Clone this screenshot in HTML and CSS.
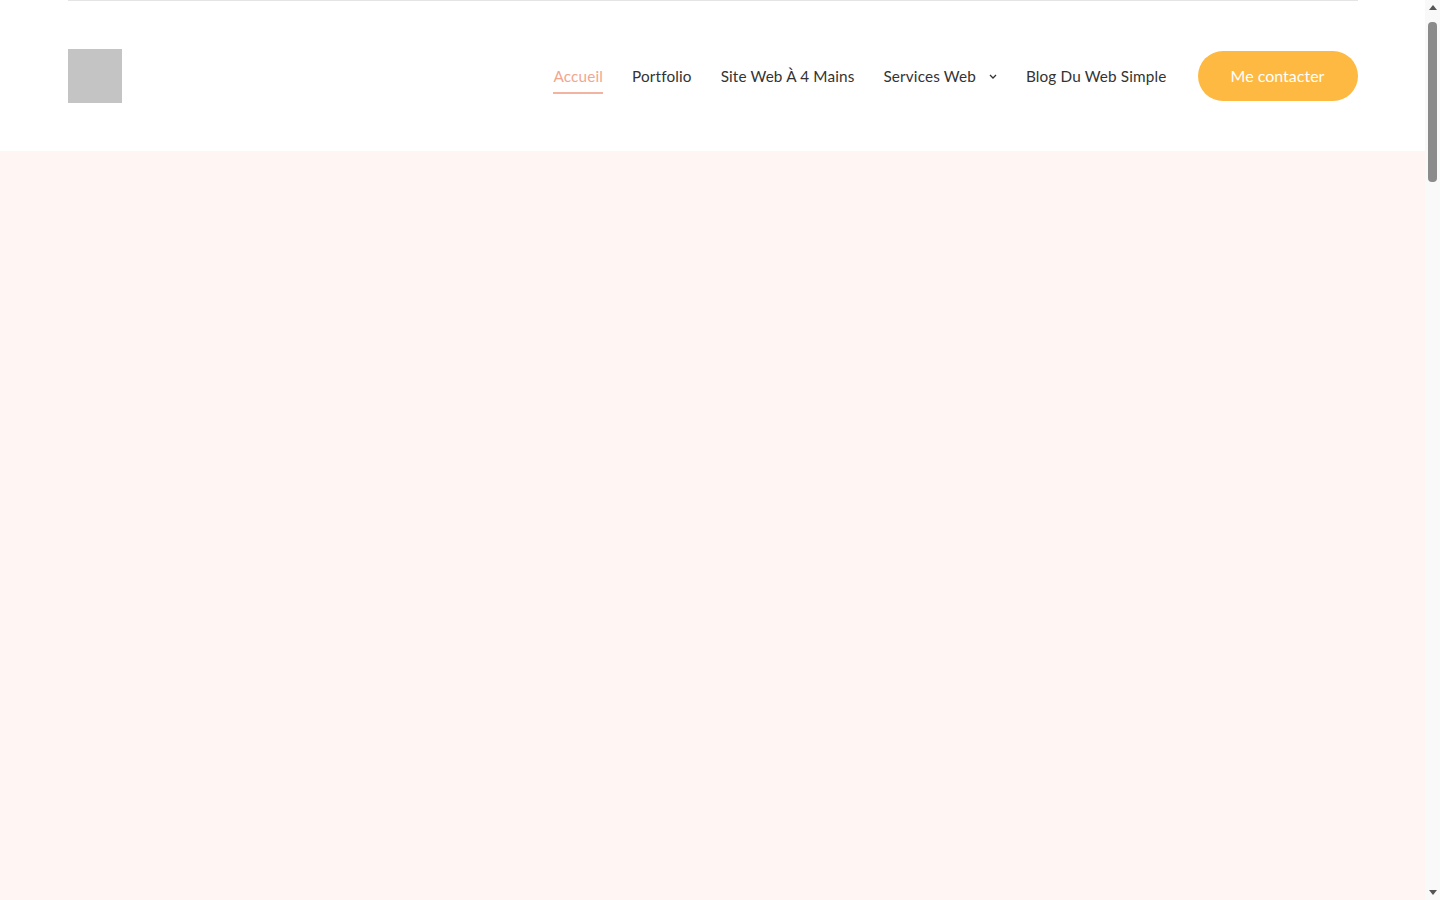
FILE: index.html
```html
<!DOCTYPE html>
<html lang="fr">
<head>
	<meta charset="utf-8">
	<title>Accueil</title>
	<link rel="stylesheet" href="styles.css">
</head>
<body>
	<header class="site-header">
		<div class="header-inner">
			<a class="logo" href="#"></a>
			<nav class="main-nav">
				<ul class="menu">
					<li><a class="menu-link active" href="#">Accueil</a></li>
					<li><a class="menu-link" href="#">Portfolio</a></li>
					<li><a class="menu-link" href="#">Site Web À 4 Mains</a></li>
					<li>
						<a class="menu-link has-sub" href="#">Services Web
							<svg class="caret" width="8" height="5" viewBox="0 0 8 5"><path d="M1 1l3 3 3-3" fill="none" stroke="#333" stroke-width="1.3"/></svg>
						</a>
					</li>
					<li><a class="menu-link" href="#">Blog Du Web Simple</a></li>
				</ul>
				<a class="btn-contact" href="#">Me contacter</a>
			</nav>
		</div>
	</header>
	<!-- bloc principal -->
	<main class="hero"></main>

	<!-- barre de défilement -->
	<div class="scroll-rail">
		<svg class="rail-arrow" width="8" height="5" viewBox="0 0 8 5"><path d="M0 5L4 0 8 5z" fill="#555"/></svg>
		<div class="rail-track"><div class="rail-thumb"></div></div>
		<svg class="rail-arrow" width="8" height="5" viewBox="0 0 8 5"><path d="M0 0L4 5 8 0z" fill="#555"/></svg>
	</div>
</body>
</html>
```

FILE: styles.css
```css
*{
	margin: 0;
	padding: 0;
	box-sizing: border-box;
}
body{
	font-family: "Lato", "Open Sans", sans-serif;
	color: #333;
	background: #fff;
	width: calc(100% - 15px);
}
a{
	text-decoration: none;
	color: inherit;
}

.site-header{
	background: #fff;
}
.header-inner{
	width: 1290px;
	margin: 0 auto;
	height: 151px;
	border-top: 1px solid #e4e4e4;
	display: flex;
	align-items: center;
	justify-content: space-between;
}
.logo{
	display: block;
	width: 54px;
	height: 54px;
	background: #c4c4c4;
}
.main-nav{
	display: flex;
	align-items: center;
	gap: 31px;
}
.menu{
	display: flex;
	align-items: center;
	gap: 29px;
	list-style: none;
}
.menu-link{
	display: flex;
	align-items: center;
	gap: 10px;
	position: relative;
	font-size: 15.3px;
	line-height: 22px;
	color: #333;
	letter-spacing: 0.15px;
}
.menu-link.has-sub{
	gap: 9px;
}
.menu-link.active{
	color: #f2a68f;
}
.menu-link.active:after{
	content: '';
	position: absolute;
	left: 0;
	right: 0;
	bottom: -7px;
	height: 2px;
	background: #f2b3a1;
}
.caret{
	display: block;
	margin-left: 4px;
}
.btn-contact{
	display: inline-block;
	width: 160px;
	height: 50px;
	line-height: 50px;
	text-align: center;
	border-radius: 25px;
	background: #fdb942;
	color: #fff;
	font-size: 16px;
}

.hero{
	display: block;
	height: 4700px;
	background: #fff5f2;
}

.scroll-rail{
	position: fixed;
	top: 0;
	right: 0;
	width: 15px;
	height: 100vh;
	background: #f9f9f9;
	display: flex;
	flex-direction: column;
	align-items: center;
	padding: 5px 0;
	gap: 2px;
}
.rail-arrow{
	display: block;
	flex: none;
}
.rail-track{
	flex: 1;
	width: 100%;
	padding: 10px 3px;
}
.rail-thumb{
	height: 160px;
	border-radius: 4px;
	background: #8b8b8b;
}
```
